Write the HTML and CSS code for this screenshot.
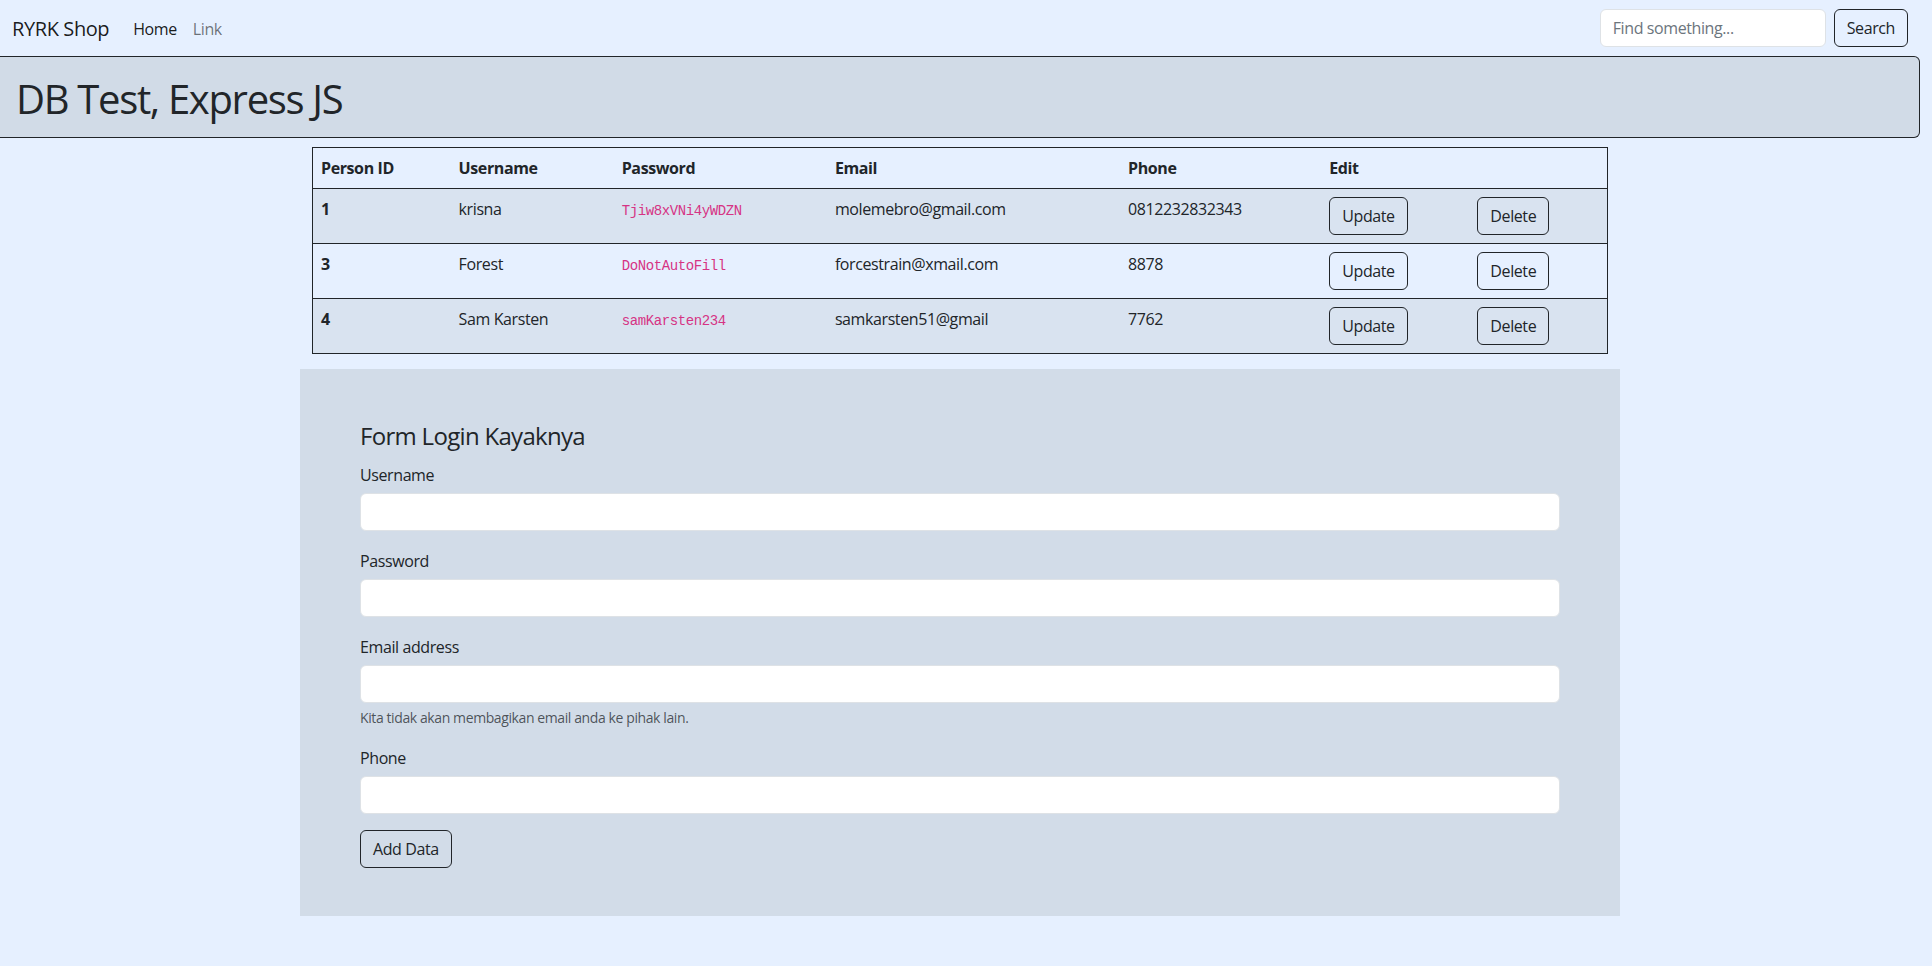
FILE: index.html
```html
<!DOCTYPE html>
<html lang="id">
<head>
<meta charset="utf-8">
<title>RYRK Shop</title>
<link rel="stylesheet" href="styles.css">
</head>
<body>
<div class="page">
  <nav class="navbar">
    <div class="nav-left">
      <a class="brand" href="#">RYRK Shop</a>
      <ul class="nav-links">
        <li><a class="nav-link active" href="#">Home</a></li>
        <li><a class="nav-link" href="#">Link</a></li>
      </ul>
    </div>
    <form class="search">
      <input class="search-input" type="search" placeholder="Find something...">
      <button class="btn" type="button">Search</button>
    </form>
  </nav>

  <header class="hero">
    <h1 class="hero-title">DB Test, Express JS</h1>
  </header>

  <div class="container table-wrap">
    <table class="data-table">
      <colgroup>
        <col class="c-id"><col class="c-user"><col class="c-pass"><col class="c-email"><col class="c-phone"><col class="c-edit"><col class="c-del">
      </colgroup>
      <thead>
        <tr><th>Person ID</th><th>Username</th><th>Password</th><th>Email</th><th>Phone</th><th>Edit</th><th></th></tr>
      </thead>
      <tbody>
        <tr class="odd">
          <th>1</th><td>krisna</td><td><code>Tjiw8xVNi4yWDZN</code></td><td>molemebro@gmail.com</td><td>0812232832343</td>
          <td><button class="btn" type="button">Update</button></td><td><button class="btn" type="button">Delete</button></td>
        </tr>
        <tr>
          <th>3</th><td>Forest</td><td><code>DoNotAutoFill</code></td><td>forcestrain@xmail.com</td><td>8878</td>
          <td><button class="btn" type="button">Update</button></td><td><button class="btn" type="button">Delete</button></td>
        </tr>
        <tr class="odd">
          <th>4</th><td>Sam Karsten</td><td><code>samKarsten234</code></td><td>samkarsten51@gmail</td><td>7762</td>
          <td><button class="btn" type="button">Update</button></td><td><button class="btn" type="button">Delete</button></td>
        </tr>
      </tbody>
    </table>
  </div>

  <section class="container form-box">
    <form class="form-inner">
      <h4 class="form-title">Form Login Kayaknya</h4>
      <div class="field">
        <label class="label" for="u">Username</label>
        <input class="control" id="u" type="text">
      </div>
      <div class="field">
        <label class="label" for="p">Password</label>
        <input class="control" id="p" type="password">
      </div>
      <div class="field">
        <label class="label" for="e">Email address</label>
        <input class="control" id="e" type="email">
        <div class="help">Kita tidak akan membagikan email anda ke pihak lain.</div>
      </div>
      <div class="field">
        <label class="label" for="ph">Phone</label>
        <input class="control" id="ph" type="text">
      </div>
      <button class="btn" type="button">Add Data</button>
    </form>
  </section>
</div>
</body>
</html>
```

FILE: styles.css
```css
* { box-sizing: border-box; }

html, body {
  margin: 0;
  background: #e6f0ff;
}

body {
  font-family: "Open Sans", "Noto Sans", sans-serif;
  font-size: 16px;
  line-height: 1.5;
  letter-spacing: -0.025em;
  color: #212529;
  height: 966px;
  overflow: hidden;
}

.page {
  width: 1920px;
}

/* navbar */
.navbar {
  display: flex;
  align-items: center;
  justify-content: space-between;
  padding: 8px 12px;
  height: 56px;
}

.nav-left {
  display: flex;
  align-items: center;
  padding-top: 2px;
}

.brand {
  font-size: 20px;
  line-height: 30px;
  padding: 5px 0;
  margin-right: 16px;
  color: rgba(0, 0, 0, 0.9);
  text-decoration: none;
}

.nav-links {
  display: flex;
  list-style: none;
  margin: 0;
  padding: 0;
}

.nav-link {
  display: block;
  padding: 8px;
  color: rgba(0, 0, 0, 0.55);
  text-decoration: none;
}

.nav-link.active {
  color: rgba(0, 0, 0, 0.9);
}

.search {
  display: flex;
  gap: 8px;
  margin: 0;
}

.search-input {
  width: 226px;
  height: 38px;
  padding: 6px 12px;
  font: inherit;
  letter-spacing: inherit;
  color: #212529;
  background: #fff;
  border: 1px solid #dee2e6;
  border-radius: 6px;
  outline: none;
}

.search-input::placeholder {
  color: #6c757d;
}

.btn {
  display: inline-block;
  font: inherit;
  letter-spacing: inherit;
  line-height: 24px;
  padding: 6px 12px;
  color: #212529;
  background: transparent;
  border: 1px solid #212529;
  border-radius: 6px;
  cursor: pointer;
}

/* hero */
.hero {
  width: 1920px;
  background: #d1dbe7;
  border: 1px solid #212529;
  border-left: 0;
  border-radius: 0 6px 6px 0;
  padding: 18px 16px 14px;
}

.hero-title {
  margin: 0;
  font-size: 40px;
  font-weight: 400;
  line-height: 1.2;
  letter-spacing: -0.033em;
}

/* container */
.container {
  width: 1320px;
  margin: 0 auto;
  padding: 0 12px;
}

.table-wrap {
  margin-top: 9px;
}

.data-table {
  width: 100%;
  border-collapse: collapse;
  border: 1px solid #212529;
  margin-bottom: 15px;
  table-layout: fixed;
}

.c-id { width: 138px; }
.c-user { width: 163px; }
.c-pass { width: 213px; }
.c-email { width: 293px; }
.c-phone { width: 201px; }
.c-edit { width: 148px; }
.c-del { width: 138px; }

.data-table th,
.data-table td {
  text-align: left;
  vertical-align: top;
  padding: 8px;
  border-bottom: 1px solid #212529;
}

.data-table th {
  font-weight: 700;
}

.data-table td {
  font-weight: 400;
}

.data-table tr.odd {
  background: #d9e3f0;
}

code {
  font-family: "Liberation Mono", "DejaVu Sans Mono", monospace;
  font-size: 14px;
  letter-spacing: -0.4px;
  color: #d63384;
}

/* form */
.form-box {
  background: #d2dce8;
}

.form-inner {
  padding: 48px;
  margin: 0;
}

.form-title {
  margin: 5px 0 10px;
  font-size: 24px;
  font-weight: 400;
  line-height: 1.2;
  letter-spacing: -0.029em;
}

.field {
  margin-bottom: 16px;
}

.label {
  display: block;
  padding-top: 2px;
  margin-bottom: 6px;
}

.control {
  display: block;
  width: 100%;
  height: 38px;
  padding: 6px 12px;
  font: inherit;
  background: #fff;
  border: 1px solid #dee2e6;
  border-radius: 6px;
  outline: none;
}

.help {
  margin-top: 4px;
  font-size: 14px;
  line-height: 21px;
  color: rgba(33, 37, 41, 0.75);
}
```
